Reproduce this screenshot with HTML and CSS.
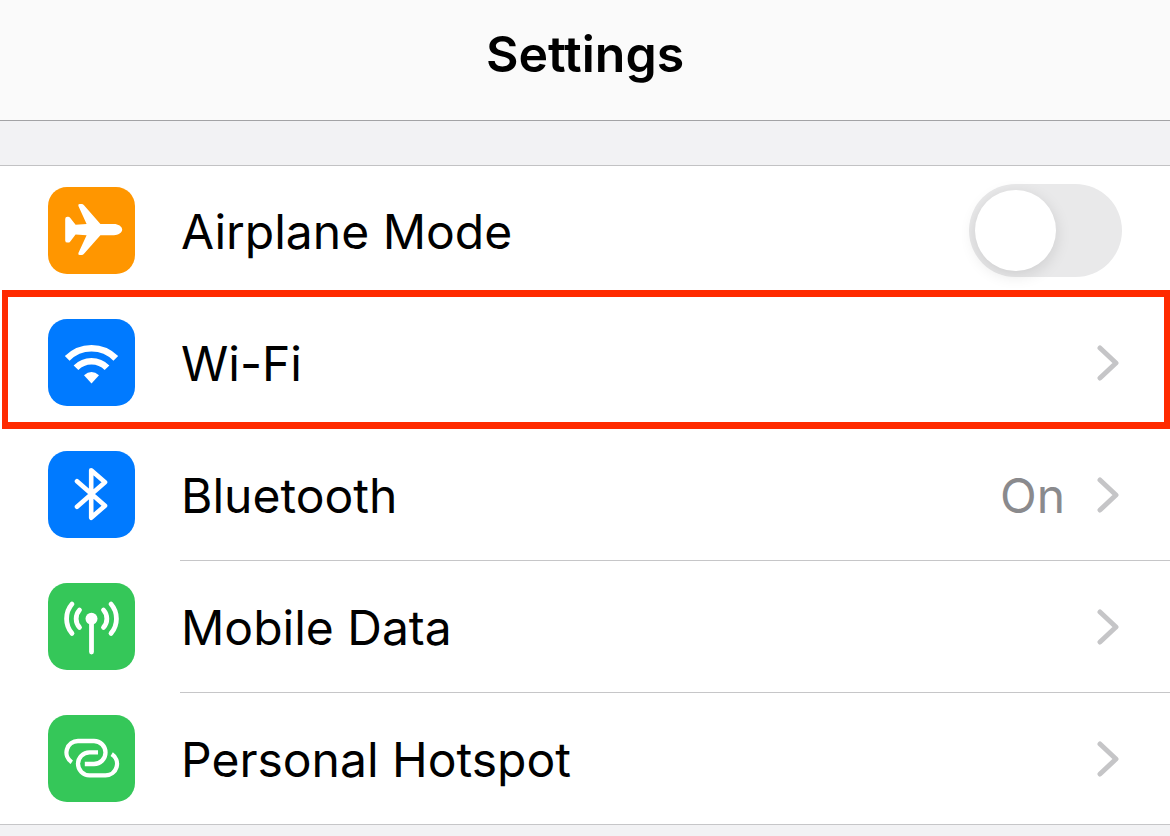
FILE: index.html
```
<!DOCTYPE html>
<html lang="en">
<head>
<meta charset="utf-8">
<meta name="viewport" content="width=device-width, initial-scale=1">
<title>Settings</title>
<link rel="stylesheet" href="styles.css">
</head>
<body>
<header class="navbar">
  <h1 class="title">Settings</h1>
</header>
<main class="content">
  <ul class="list">
    <li class="row row-first">
      <svg class="icon orange" viewBox="0 0 87 87" aria-hidden="true">
        <path fill="#fff" d="M17.200 32Q17.200 29.800 19.500 29.800H20Q21.400 29.800 22.300 31L27.600 37.800L38.600 37L30.400 19Q29.800 17 31.600 17H33.600Q35 17 36 18.200L52.400 37H66C70 37 74.200 39.300 74.200 42.600C74.200 45.900 70 48.200 66 48.200H52.400L36 66.800Q35 68 33.600 68H31.600Q29.800 68 30.400 66L38.600 48.200L27.600 47.400L22.300 54.400Q21.400 55.600 20 55.600H19.500Q17.200 55.600 17.200 53.400Z"/>
      </svg>
      <label class="label" for="airplane">Airplane Mode</label>
      <input class="toggle" type="checkbox" role="switch" id="airplane">
    </li>
    <li class="row highlighted">
      <svg class="icon blue" viewBox="0 0 87 87" aria-hidden="true">
        <g fill="none" stroke="#fff" stroke-width="6.6">
          <path d="M19.200 39.400A34 34 0 0 1 67.800 39.400"/>
          <path d="M28 48.700A21.700 21.700 0 0 1 59 48.700"/>
        </g>
        <path fill="#fff" d="M36 56.200Q43.500 49.600 51 56.200L43.500 64.400Z"/>
      </svg>
      <a class="label" href="#wifi">Wi-Fi</a>
      <svg class="chevron" viewBox="0 0 22 36" aria-hidden="true"><path d="M3 3L19 18L3 33"/></svg>
    </li>
    <li class="row">
      <svg class="icon blue" viewBox="0 0 87 87" aria-hidden="true">
        <path fill="none" stroke="#fff" stroke-width="4.600" stroke-linecap="round" stroke-linejoin="round" d="M29 30.300L57 54.700L43.200 66.800V19.200L57 31.300L29 55.700"/>
      </svg>
      <a class="label" href="#bluetooth">Bluetooth</a>
      <span class="value">On</span>
      <svg class="chevron" viewBox="0 0 22 36" aria-hidden="true"><path d="M3 3L19 18L3 33"/></svg>
    </li>
    <li class="row">
      <svg class="icon green" viewBox="0 0 87 87" aria-hidden="true">
        <circle cx="43.500" cy="35.700" r="6" fill="#fff"/>
        <g fill="none" stroke="#fff" stroke-width="4.800" stroke-linecap="round">
          <path d="M43.500 36V69"/>
          <path d="M31.500 27A13 13 0 0 0 31.500 44.400M55.500 27A13 13 0 0 1 55.500 44.400"/>
          <path d="M24 21A22.600 22.600 0 0 0 24 50.400M63 21A22.600 22.600 0 0 1 63 50.400"/>
        </g>
      </svg>
      <a class="label" href="#mobile-data">Mobile Data</a>
      <svg class="chevron" viewBox="0 0 22 36" aria-hidden="true"><path d="M3 3L19 18L3 33"/></svg>
    </li>
    <li class="row">
      <svg class="icon green" viewBox="0 0 87 87" aria-hidden="true">
        <g fill="none" stroke="#fff" stroke-width="4.300">
          <path d="M23.800 47.200A11.500 11.500 0 0 1 30 26H46A11.500 11.500 0 0 1 46 49H36.800"/>
          <path d="M50 37.300H41.500A11.500 11.500 0 0 0 41.500 60.300H57.500A11.500 11.500 0 0 0 63.700 39.100"/>
        </g>
      </svg>
      <a class="label" href="#hotspot">Personal Hotspot</a>
      <svg class="chevron" viewBox="0 0 22 36" aria-hidden="true"><path d="M3 3L19 18L3 33"/></svg>
    </li>
  </ul>
</main>
</body>
</html>
```

FILE: styles.css
```
* {
  box-sizing: border-box;
}

body {
  margin: 0;
  background: #f2f2f4;
  color: #000;
  font-family: Inter, "Liberation Sans", sans-serif;
  font-size: 48px;
  line-height: 60px;
}

.navbar {
  padding: 24px 48px 36px;
  border-bottom: 1px solid #a3a3a5;
  background: #fafafa;
  text-align: center;
}

.title {
  margin: 0;
  font-size: 50px;
  font-weight: 600;
}

.content {
  padding-top: 44px;
}

.list {
  margin: 0;
  padding: 0;
  list-style: none;
  background: #fff;
}

.row {
  position: relative;
  display: flex;
  align-items: center;
  min-height: 132px;
  padding: 0 48px;
  border-bottom: 1px solid transparent;
}

.row-first {
  padding-bottom: 1px;
  border-top: 1px solid #c2c2c4;
}

.row::after {
  content: "";
  position: absolute;
  right: 0;
  bottom: -1px;
  left: 180px;
  height: 1px;
  background: #c6c6c8;
}

.row:last-child::after {
  left: 0;
}

.highlighted::before {
  content: "";
  position: absolute;
  z-index: 1;
  inset: -7px 0 -1px 2px;
  border: solid #ff2a00;
  border-width: 7px 6px;
  pointer-events: none;
}

.icon {
  flex: none;
  width: 87px;
  height: 87px;
  margin-right: 46px;
  border-radius: 19px;
}

.orange {
  background: #ff9600;
}

.blue {
  background: #007aff;
}

.green {
  background: #35c759;
}

.label {
  flex: 1;
  padding-top: 3px;
  color: inherit;
  text-decoration: none;
}

.value {
  margin-right: 32px;
  padding-top: 3px;
  color: #8a8a8d;
}

.chevron {
  flex: none;
  width: 22px;
  height: 36px;
  margin-right: 3px;
  fill: none;
  stroke: #c5c5c7;
  stroke-width: 5;
  stroke-linecap: round;
  stroke-linejoin: round;
}

.toggle {
  appearance: none;
  flex: none;
  width: 153px;
  height: 93px;
  margin: 0;
  padding: 6px;
  border-radius: 47px;
  background: #e9e9ea;
}

.toggle::before {
  content: "";
  display: block;
  width: 81px;
  height: 81px;
  border-radius: 50%;
  background: #fff;
  box-shadow: 0 4px 16px rgba(0, 0, 0, 0.12);
}

.toggle:checked {
  background: #35c759;
}

.toggle:checked::before {
  margin-left: 60px;
}
```
